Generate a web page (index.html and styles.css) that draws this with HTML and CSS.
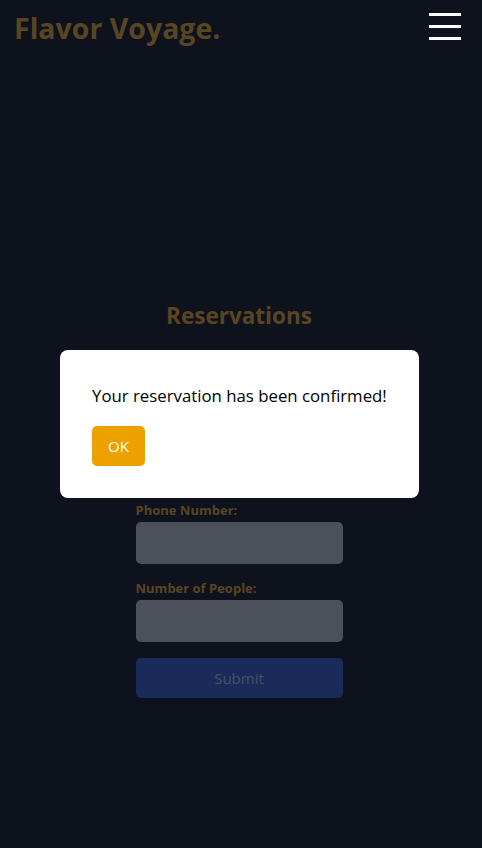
FILE: index.html
```html
<!DOCTYPE html>
<html lang="en">
<head>
<meta charset="utf-8">
<title>Flavor Voyage - Reservations</title>
<link rel="stylesheet" href="styles.css">
</head>
<body>
<header class="site-header">
  <div class="logo">Flavor Voyage.</div>
  <button class="menu-btn" aria-label="Menu">
    <span class="bar"></span><span class="bar"></span><span class="bar"></span>
  </button>
</header>
<main class="page">
  <section class="reservations">
    <h2 class="title">Reservations</h2>
    <form class="form">
      <div class="field">
        <label class="label">Name:</label>
        <input class="input" type="text">
      </div>
      <div class="field">
        <label class="label">Email:</label>
        <input class="input" type="email">
      </div>
      <div class="field">
        <label class="label">Phone Number:</label>
        <input class="input" type="tel">
      </div>
      <div class="field">
        <label class="label">Number of People:</label>
        <input class="input" type="number">
      </div>
      <button class="submit" type="button">Submit</button>
    </form>
  </section>
</main>
<div class="overlay">
  <div class="modal">
    <p class="modal-text">Your reservation has been confirmed!</p>
    <button class="ok-btn" type="button">OK</button>
  </div>
</div>
</body>
</html>
```
FILE: styles.css
```css
* { box-sizing: border-box; }
html, body { margin: 0; padding: 0; }
body {
  background: #1c2439;
  font-family: "Open Sans", "Noto Sans", sans-serif;
  height: 848px;
  overflow: hidden;
}
.site-header {
  display: flex;
  justify-content: space-between;
  align-items: center;
  height: 56px;
  padding: 0 21px 0 15px;
}
.logo {
  color: #b48a46;
  font-weight: 700;
  font-size: 28.5px;
  line-height: 1;
  margin-left: -1px;
}
.menu-btn {
  position: relative;
  z-index: 20;
  background: none;
  border: 0;
  padding: 0;
  width: 32px;
  display: flex;
  flex-direction: column;
  gap: 9px;
  margin-top: -4px;
}
.bar {
  display: block;
  width: 32px;
  height: 3px;
  background: #ffffff;
}
.page {
  display: flex;
  justify-content: center;
  padding-top: 245px;
  padding-right: 4px;
}
.reservations {
  width: 207px;
  display: flex;
  flex-direction: column;
  align-items: center;
}
.title {
  color: #b48a46;
  font-size: 22.5px;
  font-weight: 700;
  margin: 0 0 15px;
  line-height: 30px;
}
.form {
  width: 207px;
  display: flex;
  flex-direction: column;
}
.field {
  display: flex;
  flex-direction: column;
  margin-bottom: 16px;
}
.label {
  color: #b48a46;
  font-size: 13px;
  font-weight: 700;
  line-height: 17px;
  margin-bottom: 3px;
}
.input {
  height: 42px;
  border: 0;
  border-radius: 5px;
  background: #96a0b6;
}
.submit {
  height: 40px;
  border: 0;
  border-radius: 5px;
  background: #3456b4;
  color: #909fcf;
  font-family: inherit;
  font-size: 15px;
}
.overlay {
  position: fixed;
  inset: 0;
  background: rgba(0, 0, 0, 0.5);
  display: flex;
  align-items: center;
  justify-content: center;
  z-index: 10;
}
.modal {
  background: #ffffff;
  border-radius: 8px;
  width: 359px;
  height: 148px;
  padding: 33px 32px;
  margin-left: -3px;
}
.modal-text {
  margin: 0 0 17px;
  font-size: 16.8px;
  line-height: 26px;
  color: #000;
}
.ok-btn {
  background: #eca100;
  color: #fff;
  border: 0;
  border-radius: 5px;
  width: 53px;
  height: 40px;
  font-family: inherit;
  font-size: 15px;
  padding: 0;
}
```
